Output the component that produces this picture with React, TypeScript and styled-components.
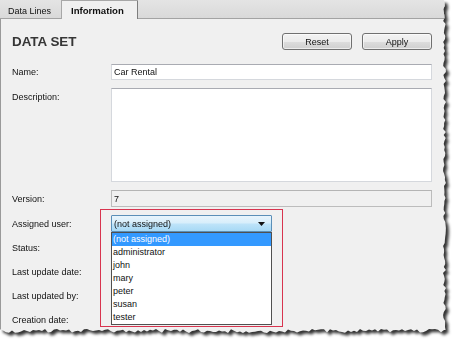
import React from "react";
import styled, { createGlobalStyle } from "styled-components";

const GlobalStyle = createGlobalStyle`
  html, body { margin: 0; padding: 0; background: #ffffff; }
  body { font-family: "Liberation Sans", Arial, sans-serif; font-size: 9px; color: #111111; }
  * { box-sizing: border-box; }
`;

function tornPolygon(): string {
  let seed = 7;
  const rnd = () => {
    seed = (seed * 9301 + 49297) % 233280;
    return seed / 233280;
  };
  const pts: string[] = ["0px 0px", "444px 0px"];
  for (let y = 3; y <= 330; y += 3) {
    pts.push(`${(443 + rnd() * 3).toFixed(1)}px ${y}px`);
  }
  for (let x = 444; x >= 0; x -= 3) {
    pts.push(`${x}px ${(329 + rnd() * 4).toFixed(1)}px`);
  }
  pts.push("0px 331px");
  return `polygon(${pts.join(",")})`;
}

const TORN = tornPolygon();

const Shadow = styled.div`
  width: 454px;
  height: 345px;
  filter: drop-shadow(3px 3px 1.5px rgba(40, 40, 40, 0.95));
`;

const Frame = styled.div`
  width: 448px;
  height: 335px;
  clip-path: ${TORN};
  background: #f0f0f0;
  display: flex;
  flex-direction: column;
  overflow: hidden;
`;

const TabBar = styled.div`
  height: 19px;
  background: linear-gradient(#e4e4e4, #d9d9d9);
  display: flex;
  align-items: flex-end;
  padding-left: 3px;
  border-bottom: 1px solid #a3a3a3;
`;

const Tab = styled.div<{ $active?: boolean }>`
  height: ${(p) => (p.$active ? "19px" : "15px")};
  padding: 0 ${(p) => (p.$active ? "9px" : "5px")};
  margin-bottom: ${(p) => (p.$active ? "-1px" : "0")};
  display: flex;
  align-items: center;
  font-size: ${(p) => (p.$active ? "9.6px" : "9px")};
  font-weight: ${(p) => (p.$active ? 700 : 400)};
  color: #111111;
  background: ${(p) => (p.$active ? "#f0f0f0" : "transparent")};
  border: ${(p) => (p.$active ? "1px solid #a7a7a7" : "none")};
  border-bottom: none;
  border-right: ${(p) => (p.$active ? "1px solid #7d7d7d" : "none")};
  border-radius: 1px 1px 0 0;
  width: ${(p) => (p.$active ? "77px" : "58px")};
`;

const Panel = styled.div`
  flex: 1;
  border-left: 1px solid #9a9a9a;
  padding: 14px 16px 0 11px;
  display: flex;
  flex-direction: column;
  gap: 14px;
`;

const Header = styled.div`
  display: flex;
  align-items: center;
  height: 17px;
`;

const Title = styled.div`
  font-size: 13.4px;
  font-weight: 700;
  color: #363636;
  flex: 1;
`;

const Buttons = styled.div`
  display: flex;
  gap: 10px;
`;

const Button = styled.button`
  width: 70px;
  height: 17px;
  font-family: "Liberation Sans", Arial, sans-serif;
  font-size: 9px;
  color: #111111;
  background: linear-gradient(#f3f3f3 0%, #ebebeb 50%, #dddddd 51%, #cfcfcf 100%);
  border: 1px solid #707070;
  border-radius: 3px;
  padding: 0;
  box-shadow: inset 0 0 0 1px rgba(255, 255, 255, 0.6);
`;

const Form = styled.div`
  display: grid;
  grid-template-columns: 99px 1fr;
  grid-template-rows: 16px 94px 17px 17px 16px 16px 16px 16px;
  row-gap: 8px;
`;

const Label = styled.div<{ $top?: boolean }>`
  display: flex;
  align-items: ${(p) => (p.$top ? "flex-start" : "center")};
  padding-top: ${(p) => (p.$top ? "4px" : "0")};
  font-size: 9px;
  color: #111111;
`;

const Field = styled.div<{ $disabled?: boolean }>`
  background: ${(p) => (p.$disabled ? "#f0f0f0" : "#ffffff")};
  border: 1px solid ${(p) => (p.$disabled ? "#bcbcbc" : "#d5d8dd")};
  border-top-color: ${(p) => (p.$disabled ? "#b4b4b4" : "#a9abb2")};
  display: flex;
  align-items: center;
  padding-left: 2px;
  font-size: 9px;
  color: #111111;
`;

const Area = styled(Field)`
  align-items: flex-start;
`;

const Empty = styled.div``;

const SelectCell = styled.div`
  position: relative;
`;

const Select = styled.div`
  width: 161px;
  height: 17px;
  border: 1px solid #5b8fb8;
  border-radius: 1px;
  background: linear-gradient(#e9f5fc 0%, #d8eefb 45%, #bde3f9 55%, #a7d9f5 100%);
  display: flex;
  align-items: center;
  padding: 0 6px 0 2px;
  font-size: 9px;
  color: #111111;
`;

const SelectText = styled.span`
  flex: 1;
`;

const Arrow = styled.svg`
  width: 7px;
  height: 4px;
`;

const List = styled.div`
  position: absolute;
  left: 0;
  top: 17px;
  width: 161px;
  background: #ffffff;
  border: 1px solid #505050;
  display: flex;
  flex-direction: column;
  z-index: 2;
`;

const Item = styled.div<{ $selected?: boolean }>`
  height: 13px;
  line-height: 13px;
  padding-left: 1px;
  font-size: 9px;
  color: ${(p) => (p.$selected ? "#ffffff" : "#111111")};
  background: ${(p) => (p.$selected ? "#3399ff" : "transparent")};
`;

const Highlight = styled.div`
  position: absolute;
  left: -11px;
  top: -6px;
  width: 183px;
  height: 118px;
  border: 1px solid #d8344f;
  pointer-events: none;
  z-index: 3;
`;

const users = ["(not assigned)", "administrator", "john", "mary", "peter", "susan", "tester"];

export default function App() {
  return (
    <>
      <GlobalStyle />
      <Shadow>
        <Frame>
          <TabBar>
            <Tab>Data Lines</Tab>
            <Tab $active>Information</Tab>
          </TabBar>
          <Panel>
            <Header>
              <Title>DATA SET</Title>
              <Buttons>
                <Button>Reset</Button>
                <Button>Apply</Button>
              </Buttons>
            </Header>
            <Form>
              <Label>Name:</Label>
              <Field>Car Rental</Field>
              <Label $top>Description:</Label>
              <Area />
              <Label>Version:</Label>
              <Field $disabled>7</Field>
              <Label>Assigned user:</Label>
              <SelectCell>
                <Select>
                  <SelectText>(not assigned)</SelectText>
                  <Arrow viewBox="0 0 7 4">
                    <path d="M0 0 H7 L3.5 4 Z" fill="#111111" />
                  </Arrow>
                </Select>
                <List>
                  {users.map((u, i) => (
                    <Item key={u} $selected={i === 0}>
                      {u}
                    </Item>
                  ))}
                </List>
                <Highlight />
              </SelectCell>
              <Label>Status:</Label>
              <Empty />
              <Label>Last update date:</Label>
              <Empty />
              <Label>Last updated by:</Label>
              <Empty />
              <Label>Creation date:</Label>
              <Empty />
            </Form>
          </Panel>
        </Frame>
      </Shadow>
    </>
  );
}
